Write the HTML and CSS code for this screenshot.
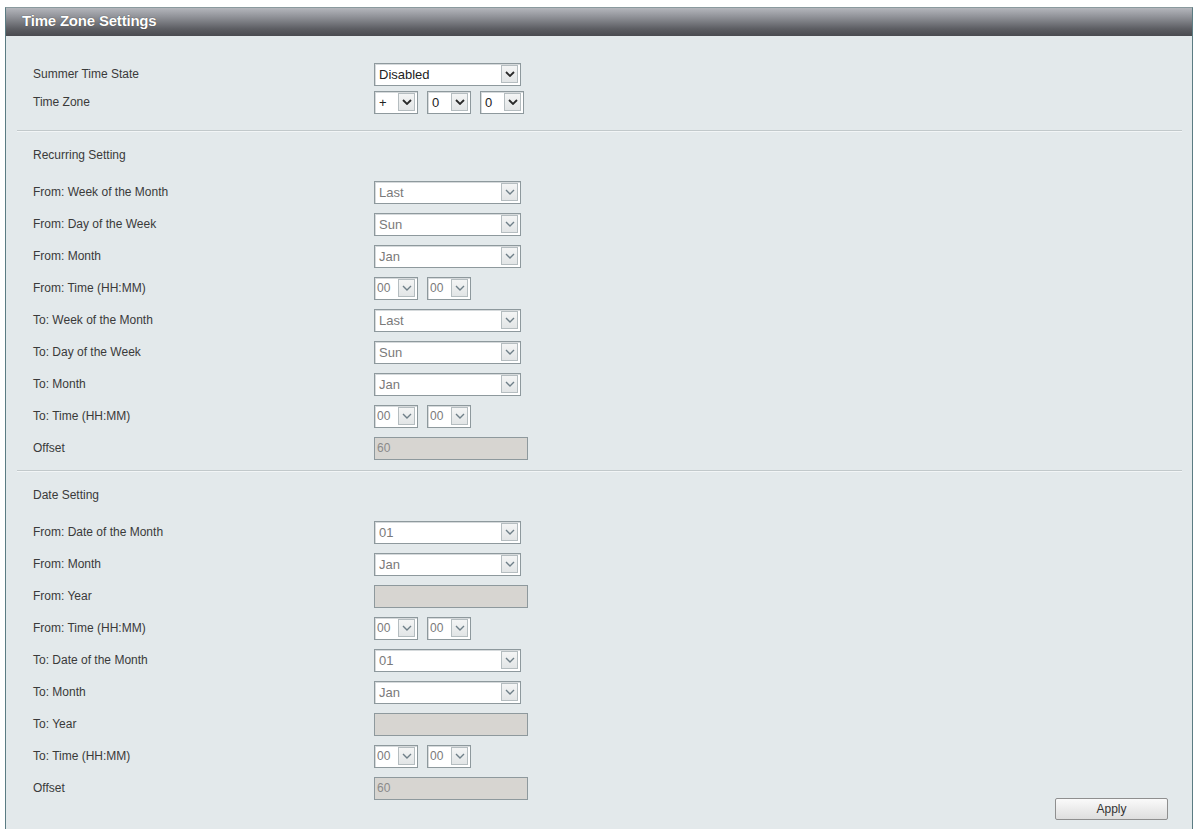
FILE: index.html
```html
<!DOCTYPE html>
<html lang="en">
  <head>
    <meta charset="UTF-8" />
    <title>Time Zone Settings</title>
    <link rel="stylesheet" href="styles.css">
  </head>
  <body>
    <div class="panel">
      <div class="panel-title">Time Zone Settings</div>
      <div class="panel-body">
        <div class="form-row">
          <div class="form-label">Summer Time State</div>
          <div class="select select-wide"><span class="select-value">Disabled</span><span class="select-arrow"><svg viewBox="0 0 10 6"><path d="M1 1L5 5L9 1"/></svg></span></div>
        </div>
        <div class="form-row">
          <div class="form-label">Time Zone</div>
          <div class="select select-small"><span class="select-value">+</span><span class="select-arrow"><svg viewBox="0 0 10 6"><path d="M1 1L5 5L9 1"/></svg></span></div>
          <div class="select select-small"><span class="select-value">0</span><span class="select-arrow"><svg viewBox="0 0 10 6"><path d="M1 1L5 5L9 1"/></svg></span></div>
          <div class="select select-small"><span class="select-value">0</span><span class="select-arrow"><svg viewBox="0 0 10 6"><path d="M1 1L5 5L9 1"/></svg></span></div>
        </div>

        <div class="separator"></div>
        <div class="section-title">Recurring Setting</div>
        <div class="section">
          <div class="form-row tall">
            <div class="form-label">From: Week of the Month</div>
            <div class="select select-wide disabled"><span class="select-value">Last</span><span class="select-arrow"><svg viewBox="0 0 10 6"><path d="M1 1L5 5L9 1"/></svg></span></div>
          </div>
          <div class="form-row tall">
            <div class="form-label">From: Day of the Week</div>
            <div class="select select-wide disabled"><span class="select-value">Sun</span><span class="select-arrow"><svg viewBox="0 0 10 6"><path d="M1 1L5 5L9 1"/></svg></span></div>
          </div>
          <div class="form-row tall">
            <div class="form-label">From: Month</div>
            <div class="select select-wide disabled"><span class="select-value">Jan</span><span class="select-arrow"><svg viewBox="0 0 10 6"><path d="M1 1L5 5L9 1"/></svg></span></div>
          </div>
          <div class="form-row tall">
            <div class="form-label">From: Time (HH:MM)</div>
            <div class="select select-time disabled"><span class="select-value">00</span><span class="select-arrow"><svg viewBox="0 0 10 6"><path d="M1 1L5 5L9 1"/></svg></span></div>
            <div class="select select-time disabled"><span class="select-value">00</span><span class="select-arrow"><svg viewBox="0 0 10 6"><path d="M1 1L5 5L9 1"/></svg></span></div>
          </div>
          <div class="form-row tall">
            <div class="form-label">To: Week of the Month</div>
            <div class="select select-wide disabled"><span class="select-value">Last</span><span class="select-arrow"><svg viewBox="0 0 10 6"><path d="M1 1L5 5L9 1"/></svg></span></div>
          </div>
          <div class="form-row tall">
            <div class="form-label">To: Day of the Week</div>
            <div class="select select-wide disabled"><span class="select-value">Sun</span><span class="select-arrow"><svg viewBox="0 0 10 6"><path d="M1 1L5 5L9 1"/></svg></span></div>
          </div>
          <div class="form-row tall">
            <div class="form-label">To: Month</div>
            <div class="select select-wide disabled"><span class="select-value">Jan</span><span class="select-arrow"><svg viewBox="0 0 10 6"><path d="M1 1L5 5L9 1"/></svg></span></div>
          </div>
          <div class="form-row tall">
            <div class="form-label">To: Time (HH:MM)</div>
            <div class="select select-time disabled"><span class="select-value">00</span><span class="select-arrow"><svg viewBox="0 0 10 6"><path d="M1 1L5 5L9 1"/></svg></span></div>
            <div class="select select-time disabled"><span class="select-value">00</span><span class="select-arrow"><svg viewBox="0 0 10 6"><path d="M1 1L5 5L9 1"/></svg></span></div>
          </div>
          <div class="form-row tall">
            <div class="form-label">Offset</div>
            <div class="text-input">60</div>
          </div>
        </div>

        <div class="separator tight"></div>
        <div class="section-title">Date Setting</div>
        <div class="section">
          <div class="form-row tall">
            <div class="form-label">From: Date of the Month</div>
            <div class="select select-wide disabled"><span class="select-value">01</span><span class="select-arrow"><svg viewBox="0 0 10 6"><path d="M1 1L5 5L9 1"/></svg></span></div>
          </div>
          <div class="form-row tall">
            <div class="form-label">From: Month</div>
            <div class="select select-wide disabled"><span class="select-value">Jan</span><span class="select-arrow"><svg viewBox="0 0 10 6"><path d="M1 1L5 5L9 1"/></svg></span></div>
          </div>
          <div class="form-row tall">
            <div class="form-label">From: Year</div>
            <div class="text-input"></div>
          </div>
          <div class="form-row tall">
            <div class="form-label">From: Time (HH:MM)</div>
            <div class="select select-time disabled"><span class="select-value">00</span><span class="select-arrow"><svg viewBox="0 0 10 6"><path d="M1 1L5 5L9 1"/></svg></span></div>
            <div class="select select-time disabled"><span class="select-value">00</span><span class="select-arrow"><svg viewBox="0 0 10 6"><path d="M1 1L5 5L9 1"/></svg></span></div>
          </div>
          <div class="form-row tall">
            <div class="form-label">To: Date of the Month</div>
            <div class="select select-wide disabled"><span class="select-value">01</span><span class="select-arrow"><svg viewBox="0 0 10 6"><path d="M1 1L5 5L9 1"/></svg></span></div>
          </div>
          <div class="form-row tall">
            <div class="form-label">To: Month</div>
            <div class="select select-wide disabled"><span class="select-value">Jan</span><span class="select-arrow"><svg viewBox="0 0 10 6"><path d="M1 1L5 5L9 1"/></svg></span></div>
          </div>
          <div class="form-row tall">
            <div class="form-label">To: Year</div>
            <div class="text-input"></div>
          </div>
          <div class="form-row tall">
            <div class="form-label">To: Time (HH:MM)</div>
            <div class="select select-time disabled"><span class="select-value">00</span><span class="select-arrow"><svg viewBox="0 0 10 6"><path d="M1 1L5 5L9 1"/></svg></span></div>
            <div class="select select-time disabled"><span class="select-value">00</span><span class="select-arrow"><svg viewBox="0 0 10 6"><path d="M1 1L5 5L9 1"/></svg></span></div>
          </div>
          <div class="form-row tall">
            <div class="form-label">Offset</div>
            <div class="text-input">60</div>
          </div>
        </div>

        <div class="actions">
          <button type="button" class="apply-btn">Apply</button>
        </div>
      </div>
    </div>
  </body>
</html>
```

FILE: styles.css
```css
body {
  font-family: "Liberation Sans", Arial, sans-serif;
  background-color: #ffffff;
  margin: 0;
  overflow: hidden;
}
.panel {
  margin: 7px 2px 0 5px;
  background-color: #e3e9eb;
  border-left: 1px solid #5b7c83;
  border-right: 1px solid #5b7c83;
  border-top: 1px solid #8a9a9e;
  min-height: 860px;
}
.panel-title {
  height: 28px;
  line-height: 26px;
  padding-left: 16px;
  color: #ffffff;
  font-size: 15px;
  font-weight: bold;
  letter-spacing: -0.2px;
  text-shadow: 0 0 1px #333;
  background: linear-gradient(#b4b6bc 0%, #8c8e94 35%, #5c5d62 75%, #4a4b50 100%);
}
.panel-body {
  padding-top: 24px;
}
.form-row {
  display: flex;
  align-items: center;
  height: 28px;
  padding-left: 27px;
  gap: 9px;
}
.form-row.tall {
  height: 32px;
}
.form-label {
  width: 332px;
  font-size: 12px;
  color: #3a3a3a;
}
.separator {
  margin: 14px 10px 0 11px;
  border-top: 1px solid #c2c9cb;
  border-bottom: 1px solid #f2f5f6;
}
.separator.tight {
  margin-top: 6px;
}
.section-title {
  height: 24px;
  line-height: 24px;
  margin-top: 11px;
  margin-bottom: 9px;
  padding-left: 27px;
  font-size: 12px;
  color: #3a3a3a;
}

/* fake select boxes */
.select {
  display: flex;
  align-items: center;
  height: 23px;
  box-sizing: border-box;
  background: #ffffff;
  border: 1px solid #8e999d;
  box-shadow: inset 1px 1px 0 #d6dadc;
  overflow: hidden;
}
.select-wide {
  width: 147px;
}
.select-small {
  width: 44px;
}
.select-time {
  width: 44px;
}
.select-value {
  flex: 1;
  padding-left: 4px;
  font-size: 13px;
  color: #222;
  white-space: nowrap;
  overflow: hidden;
}
.select-arrow {
  width: 17px;
  height: 18px;
  margin-right: 2px;
  box-sizing: border-box;
  background: linear-gradient(#f4f5f5, #e2e5e6);
  border: 1px solid #b5bdc0;
  display: flex;
  align-items: center;
  justify-content: center;
}
.select-arrow svg {
  width: 10px;
  height: 6px;
  fill: none;
  stroke: #2a2a2a;
  stroke-width: 1.8;
}
.select.disabled .select-value {
  color: #7a7a7a;
}
.select.disabled .select-arrow svg {
  stroke: #6f7f88;
  stroke-width: 1.4;
}
.select-time .select-value {
  padding-left: 2px;
  font-size: 12px;
}
.text-input {
  width: 154px;
  height: 23px;
  line-height: 21px;
  box-sizing: border-box;
  padding-left: 2px;
  background: #d7d5d1;
  border: 1px solid #8e999d;
  font-size: 12px;
  color: #8a8a8a;
}
.actions {
  display: flex;
  justify-content: flex-end;
  margin-top: -6px;
  padding-right: 24px;
}
.apply-btn {
  width: 113px;
  height: 22px;
  padding: 0;
  font-family: "Liberation Sans", Arial, sans-serif;
  font-size: 12px;
  color: #333;
  background: linear-gradient(#fafafa, #dedede);
  border: 1px solid #8f8f8f;
  border-radius: 2px;
  cursor: pointer;
}
```
